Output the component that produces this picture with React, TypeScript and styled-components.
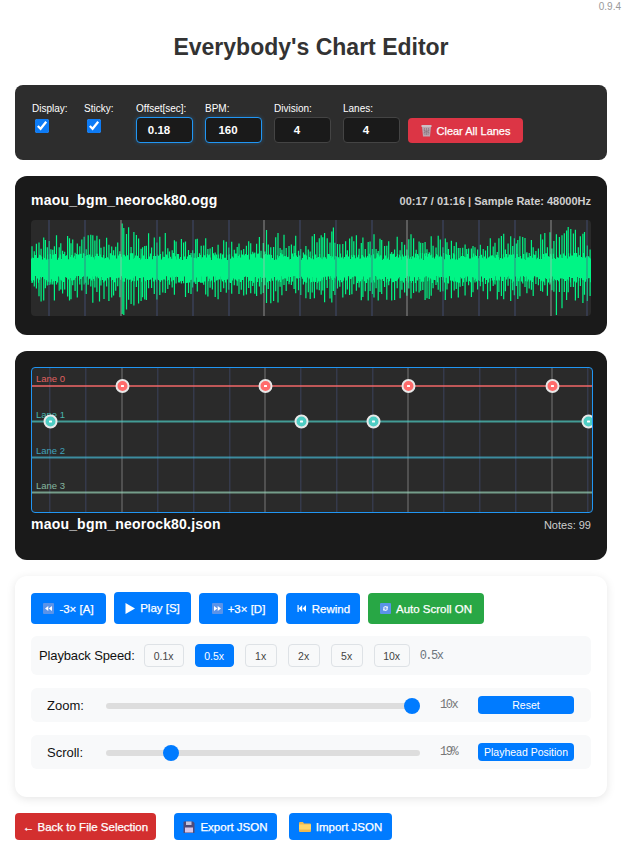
import React from "react";
import styled, { createGlobalStyle } from "styled-components";

const GlobalStyle = createGlobalStyle`
  html, body {
    margin: 0;
    padding: 0;
    background: #fff;
    font-family: "Liberation Sans", Arial, sans-serif;
    overflow: hidden;
  }
`;

const Page = styled.div`
  width: 623px;
  height: 847px;
  box-sizing: border-box;
  padding: 0 16px 0 15px;
  display: flex;
  flex-direction: column;
`;

const Version = styled.div`
  align-self: flex-end;
  margin-right: -14px;
  padding-top: 1px;
  height: 12px;
  font-size: 10px;
  line-height: 12px;
  color: #999;
`;

const Title = styled.h1`
  margin: 20px 0 24px;
  height: 28px;
  font-size: 23px;
  line-height: 28px;
  font-weight: 700;
  text-align: center;
  color: #333;
`;

const Toolbar = styled.div`
  height: 75px;
  box-sizing: border-box;
  padding: 18px 17px 0;
  background: #2d2d2d;
  border-radius: 8px;
  display: flex;
  align-items: flex-start;
  gap: 12px;
`;

const ToggleField = styled.label`
  width: 40px;
  display: flex;
  flex-direction: column;
  font-size: 10px;
  line-height: 12px;
  color: #fff;
`;

const Check = styled.input`
  width: 14px;
  height: 14px;
  margin: 4px 0 0 3px;
  accent-color: #0d7bf5;
`;

const NumberField = styled.label`
  width: 57px;
  display: flex;
  flex-direction: column;
  gap: 2px;
  font-size: 10px;
  line-height: 12px;
  color: #fff;
`;

const NumberInput = styled.input<{ $active?: boolean }>`
  width: 57px;
  height: 26px;
  box-sizing: border-box;
  padding: 0 2px 0 6px;
  background: #1a1a1a;
  border: 1px solid ${(p) => (p.$active ? "#2196f3" : "#444")};
  border-radius: 4px;
  box-shadow: ${(p) => (p.$active ? "0 0 4px rgba(33,150,243,.3)" : "none")};
  color: #fff;
  font-family: inherit;
  font-size: 11.5px;
  font-weight: 700;
  text-align: center;
  outline: none;
`;

const ClearButton = styled.button`
  align-self: flex-start;
  margin: 15px 0 0 -4px;
  width: 115px;
  height: 25px;
  padding: 0;
  display: flex;
  align-items: center;
  justify-content: center;
  gap: 5px;
  background: #dc3545;
  border: none;
  border-radius: 4px;
  color: #fff;
  font-family: inherit;
  font-size: 11px;
  -webkit-text-stroke: 0.25px #fff;
`;

const DarkCard = styled.section<{ $top: number; $height: number }>`
  margin-top: ${(p) => p.$top}px;
  height: ${(p) => p.$height}px;
  box-sizing: border-box;
  padding: 16px 16px 0;
  background: #1a1a1a;
  border-radius: 12px;
  display: flex;
  flex-direction: column;
`;

const InfoRow = styled.div`
  display: flex;
  align-items: center;
  justify-content: space-between;
  height: 17px;
`;

const FileName = styled.div`
  font-size: 14px;
  line-height: 17px;
  font-weight: 700;
  letter-spacing: 0.2px;
  color: #fff;
`;

const FileMeta = styled.div<{ $bold?: boolean }>`
  font-size: 11px;
  font-weight: ${(p) => (p.$bold ? 700 : 400)};
  color: #cfcfcf;
`;

const WaveBox = styled.div`
  margin-top: 11px;
  width: 560px;
  height: 96px;
  background: #2a2a2a;
  border-radius: 4px;
  overflow: hidden;
  svg {
    display: block;
  }
`;

const ChartBox = styled.div`
  width: 562px;
  height: 146px;
  box-sizing: border-box;
  border: 1px solid #2196f3;
  border-radius: 4px;
  background: #2a2a2a;
  overflow: hidden;
  svg {
    display: block;
  }
`;

const ChartInfo = styled(InfoRow)`
  margin-top: 3px;
`;

const ControlCard = styled.section`
  margin-top: 16px;
  height: 221px;
  box-sizing: border-box;
  padding: 16px;
  background: #fff;
  border-radius: 12px;
  box-shadow: 0 2px 10px rgba(0, 0, 0, 0.1);
  display: flex;
  flex-direction: column;
`;

const TransportRow = styled.div`
  height: 32px;
  display: flex;
  align-items: flex-end;
  gap: 8px;
`;

const Btn = styled.button<{ $w: number; $h?: number; $tone?: "blue" | "green" | "red" }>`
  width: ${(p) => p.$w}px;
  height: ${(p) => p.$h ?? 31}px;
  padding: 0;
  display: inline-flex;
  align-items: center;
  justify-content: center;
  gap: 5px;
  background: ${(p) => (p.$tone === "green" ? "#28a745" : p.$tone === "red" ? "#d32f2f" : "#007bff")};
  border: none;
  border-radius: 4px;
  color: #fff;
  font-family: inherit;
  font-size: 11.5px;
  -webkit-text-stroke: 0.25px #fff;
`;

const SpeedRow = styled.div`
  margin-top: 12px;
  height: 39px;
  box-sizing: border-box;
  padding: 0 8px;
  background: #f8f9fa;
  border-radius: 6px;
  display: flex;
  align-items: center;
  gap: 11px;
`;

const RowLabel = styled.span`
  font-size: 13px;
  color: #111;
`;

const SpeedLabel = styled(RowLabel)`
  margin-right: -2px;
  letter-spacing: -0.13px;
`;

const SpeedBtn = styled.button<{ $w: number; $active?: boolean }>`
  width: ${(p) => p.$w}px;
  height: 23px;
  padding: 0;
  background: ${(p) => (p.$active ? "#007bff" : "#f8f9fa")};
  border: 1px solid ${(p) => (p.$active ? "#007bff" : "#dee2e6")};
  border-radius: 4px;
  color: ${(p) => (p.$active ? "#fff" : "#444")};
  font-family: inherit;
  font-size: 10.5px;
`;

const ValueText = styled.span`
  font-family: "Liberation Mono", monospace;
  font-size: 12px;
  letter-spacing: -1.5px;
  color: #6c757d;
`;

const SpeedValue = styled(ValueText)`
  margin-left: -1px;
`;

const SliderRow = styled.div`
  margin-top: 13px;
  height: 34px;
  box-sizing: border-box;
  padding: 0 17px 0 16px;
  background: #f8f9fa;
  border-radius: 6px;
  display: flex;
  align-items: center;
`;

const SliderLabel = styled(RowLabel)`
  width: 59px;
`;

const Slider = styled.input`
  appearance: none;
  width: 314px;
  height: 6px;
  margin: 2px 0 0;
  background: #ddd;
  border-radius: 3px;
  &::-webkit-slider-thumb {
    appearance: none;
    width: 16px;
    height: 16px;
    border-radius: 50%;
    background: #007bff;
    border: none;
  }
`;

const SliderValue = styled(ValueText)`
  width: 38px;
  margin-left: 20px;
  color: #777;
`;

const SmallBtn = styled.button`
  width: 96px;
  height: 18px;
  padding: 0;
  background: #007bff;
  border: none;
  border-radius: 4px;
  color: #fff;
  font-family: inherit;
  font-size: 10.5px;
`;

const BottomRow = styled.div`
  margin-top: 16px;
  display: flex;
  gap: 12px;
`;

const BackWrap = styled.div`
  margin-right: 6px;
`;

const IconBox = styled.svg`
  flex: none;
  display: block;
`;

/* emoji style icons */
const TileIcon: React.FC<{ kind: "back" | "forward" | "skip" | "sync" }> = ({ kind }) => (
  <IconBox width="11" height="11" viewBox="0 0 11 11">
    {kind !== "skip" && <rect width="11" height="11" rx="1" fill="#5b93e8" />}
    {kind === "back" && <path d="M5.3 3v5L2 5.5zM9 3v5L5.7 5.5z" fill="#fff" />}
    {kind === "forward" && <path d="M2 3v5l3.3-2.5zM5.7 3v5L9 5.5z" fill="#fff" />}
    {kind === "skip" && <path d="M1.5 2h1.2v7H1.5zM6.2 2v7L2.8 5.5zM10 2v7L6.6 5.5z" fill="#fff" />}
    {kind === "sync" && (
      <path d="M3 5.2a2.5 2.5 0 0 1 4.3-1.4L8 3v2.6H5.5l.9-.9A1.3 1.3 0 0 0 4.2 5.2zM8 5.8a2.5 2.5 0 0 1-4.3 1.4L3 8V5.4h2.5l-.9.9a1.3 1.3 0 0 0 2.2-.5z" fill="#e6eefc" />
    )}
  </IconBox>
);

const PlayIcon = () => (
  <IconBox width="10" height="11" viewBox="0 0 10 11">
    <path d="M0.5 0v11L10 5.5z" fill="#fff" />
  </IconBox>
);

const TrashIcon = () => (
  <IconBox width="11" height="13" viewBox="0 0 11 13">
    <path d="M1 2.5h9L9 12.5H2z" fill="#b9a6b0" />
    <rect x="0.5" y="1" width="10" height="2" fill="#cdbfc6" />
    <path d="M3.5 4l.5 7M5.5 4v7M7.5 4l-.5 7M2.5 6l6 3M8.5 6l-6 3" stroke="#8a7580" strokeWidth="0.7" fill="none" />
  </IconBox>
);

const SaveIcon = () => (
  <IconBox width="12" height="12" viewBox="0 0 12 12">
    <path d="M0.5 1q0-.5.5-.5h9l1.5 1.5v9.5q0 .5-.5.5H1q-.5 0-.5-.5z" fill="#4f4a78" />
    <rect x="3" y="0.5" width="5.5" height="3.5" fill="#c4c3dc" />
    <rect x="2" y="6.5" width="8" height="5" fill="#d9c6e6" />
  </IconBox>
);

const FolderIcon = () => (
  <IconBox width="12" height="12" viewBox="0 0 12 12">
    <path d="M0 2q0-1 1-1h3l1 1.5h6q1 0 1 1V10q0 1-1 1H1q-1 0-1-1z" fill="#f0b94e" />
    <rect x="0" y="3.5" width="12" height="5" fill="#fdd56a" />
  </IconBox>
);

const MAJOR = [121, 264, 407, 551];
const MINOR = [49, 85, 157, 193, 229, 300, 336, 372, 443, 479, 515, 587];

// seeded noise so the wave form stays the same between renders
const makeWave = () => {
  let seed = 90210;
  const rnd = () => {
    seed = (seed * 1664525 + 1013904223) % 4294967296;
    return seed / 4294967296;
  };
  const center = 48;
  const anchors: [number, number][] = [
    [-30, 2],
    [90, 18],
    [234, 6],
    [280, 12],
    [377, 10],
    [521, 16],
  ];
  const spike = (x: number) => {
    const [start, boost] = anchors.filter((a) => a[0] <= x).pop() as [number, number];
    const env = 32 + 3 * Math.sin(x / 37) + 2 * Math.sin(x / 9) + boost * Math.exp(-(x - start) / 26);
    return env * (0.45 + 0.55 * rnd());
  };
  let d = "";
  // solid body of the signal
  for (let x = 0.5; x < 560; x += 1) {
    d += `M${x} ${(center - 8 - 7 * rnd()).toFixed(1)}V${(center + 8 + 7 * rnd()).toFixed(1)}`;
  }
  // tall narrow peaks on top of it
  for (let x = 1; x < 560; x += 1.5 + 1.5 * rnd()) {
    const up = Math.max(0, center - spike(x));
    const down = Math.min(96, center + spike(x));
    d += `M${x.toFixed(1)} ${up.toFixed(1)}V${down.toFixed(1)}`;
  }
  return d;
};

const WAVE = makeWave();

const Waveform = () => (
  <WaveBox>
    <svg width="560" height="96" viewBox="0 0 560 96">
      <path d={WAVE} stroke="#00f585" strokeWidth="1.2" fill="none" />
      {MINOR.map((x) => (
        <rect key={x} x={x - 32} y="0" width="2" height="96" fill="#4a5a8a" opacity="0.35" />
      ))}
      {MAJOR.map((x) => (
        <rect key={x} x={x - 32} y="0" width="2" height="96" fill="#bbbbbb" opacity="0.35" />
      ))}
    </svg>
  </WaveBox>
);

const LANES = [
  { y: 18, name: "Lane 0", color: "#ff6b6b", notes: [90.5, 233.5, 376.5, 520.5] },
  { y: 53.5, name: "Lane 1", color: "#4ecdc4", notes: [18.5, 269.5, 341.5, 556.5] },
  { y: 89.5, name: "Lane 2", color: "#45b7d1", notes: [] as number[] },
  { y: 124.5, name: "Lane 3", color: "#96ceb4", notes: [] as number[] },
];

const Chart = () => (
  <ChartBox>
    <svg width="560" height="144" viewBox="0 0 560 144">
      {MINOR.map((x) => (
        <rect key={x} x={x - 32} y="0" width="1.5" height="144" fill="#4a5a8a" opacity="0.35" />
      ))}
      {MAJOR.map((x) => (
        <rect key={x} x={x - 32} y="0" width="2" height="144" fill="#8f8f8f" opacity="0.38" />
      ))}
      {LANES.map((lane) => (
        <g key={lane.name}>
          <text x="4" y={lane.y - 4} fontSize="9.5" fontFamily="Liberation Sans, sans-serif" fill={lane.color} opacity="0.85">
            {lane.name}
          </text>
          <rect x="0" y={lane.y - 1} width="560" height="2" fill={lane.color} opacity="0.7" />
          {lane.notes.map((nx) => (
            <g key={nx}>
              <circle cx={nx} cy={lane.y} r="6" fill={lane.color} stroke="#e8e8e8" strokeWidth="2" />
              <rect x={nx - 1.5} y={lane.y - 1} width="3" height="2" rx="0.5" fill="#fff" />
            </g>
          ))}
        </g>
      ))}
    </svg>
  </ChartBox>
);

const SPEEDS = [
  { label: "0.1x", w: 40 },
  { label: "0.5x", w: 39, active: true },
  { label: "1x", w: 32 },
  { label: "2x", w: 32 },
  { label: "5x", w: 32 },
  { label: "10x", w: 36 },
];

const App: React.FC = () => {
  return (
    <Page>
      <GlobalStyle />
      <Version>0.9.4</Version>
      <Title>Everybody's Chart Editor</Title>

      <Toolbar>
        <ToggleField>
          Display:
          <Check type="checkbox" defaultChecked />
        </ToggleField>
        <ToggleField>
          Sticky:
          <Check type="checkbox" defaultChecked />
        </ToggleField>
        <NumberField>
          Offset[sec]:
          <NumberInput type="number" defaultValue="0.18" $active />
        </NumberField>
        <NumberField>
          BPM:
          <NumberInput type="number" defaultValue="160" $active />
        </NumberField>
        <NumberField>
          Division:
          <NumberInput type="number" defaultValue="4" />
        </NumberField>
        <NumberField>
          Lanes:
          <NumberInput type="number" defaultValue="4" />
        </NumberField>
        <ClearButton>
          <TrashIcon />
          Clear All Lanes
        </ClearButton>
      </Toolbar>

      <DarkCard $top={16} $height={159}>
        <InfoRow>
          <FileName>maou_bgm_neorock80.ogg</FileName>
          <FileMeta $bold>00:17 / 01:16 | Sample Rate: 48000Hz</FileMeta>
        </InfoRow>
        <Waveform />
      </DarkCard>

      <DarkCard $top={16} $height={209}>
        <Chart />
        <ChartInfo>
          <FileName>maou_bgm_neorock80.json</FileName>
          <FileMeta>Notes: 99</FileMeta>
        </ChartInfo>
      </DarkCard>

      <ControlCard>
        <TransportRow>
          <Btn $w={75}>
            <TileIcon kind="back" /> -3× [A]
          </Btn>
          <Btn $w={77} $h={32}>
            <PlayIcon /> Play [S]
          </Btn>
          <Btn $w={79}>
            <TileIcon kind="forward" /> +3× [D]
          </Btn>
          <Btn $w={74}>
            <TileIcon kind="skip" /> Rewind
          </Btn>
          <Btn $w={116} $tone="green">
            <TileIcon kind="sync" /> Auto Scroll ON
          </Btn>
        </TransportRow>

        <SpeedRow>
          <SpeedLabel>Playback Speed:</SpeedLabel>
          {SPEEDS.map((s) => (
            <SpeedBtn key={s.label} $w={s.w} $active={s.active}>
              {s.label}
            </SpeedBtn>
          ))}
          <SpeedValue>0.5x</SpeedValue>
        </SpeedRow>

        <SliderRow>
          <SliderLabel>Zoom:</SliderLabel>
          <Slider type="range" min={0} max={100} defaultValue={100} />
          <SliderValue>10x</SliderValue>
          <SmallBtn>Reset</SmallBtn>
        </SliderRow>

        <SliderRow>
          <SliderLabel>Scroll:</SliderLabel>
          <Slider type="range" min={0} max={100} defaultValue={19} />
          <SliderValue>19%</SliderValue>
          <SmallBtn>Playhead Position</SmallBtn>
        </SliderRow>
      </ControlCard>

      <BottomRow>
        <BackWrap>
          <Btn $w={141} $h={27} $tone="red">
            ← Back to File Selection
          </Btn>
        </BackWrap>
        <Btn $w={103} $h={27}>
          <SaveIcon /> Export JSON
        </Btn>
        <Btn $w={103} $h={27}>
          <FolderIcon /> Import JSON
        </Btn>
      </BottomRow>
    </Page>
  );
};

export default App;
